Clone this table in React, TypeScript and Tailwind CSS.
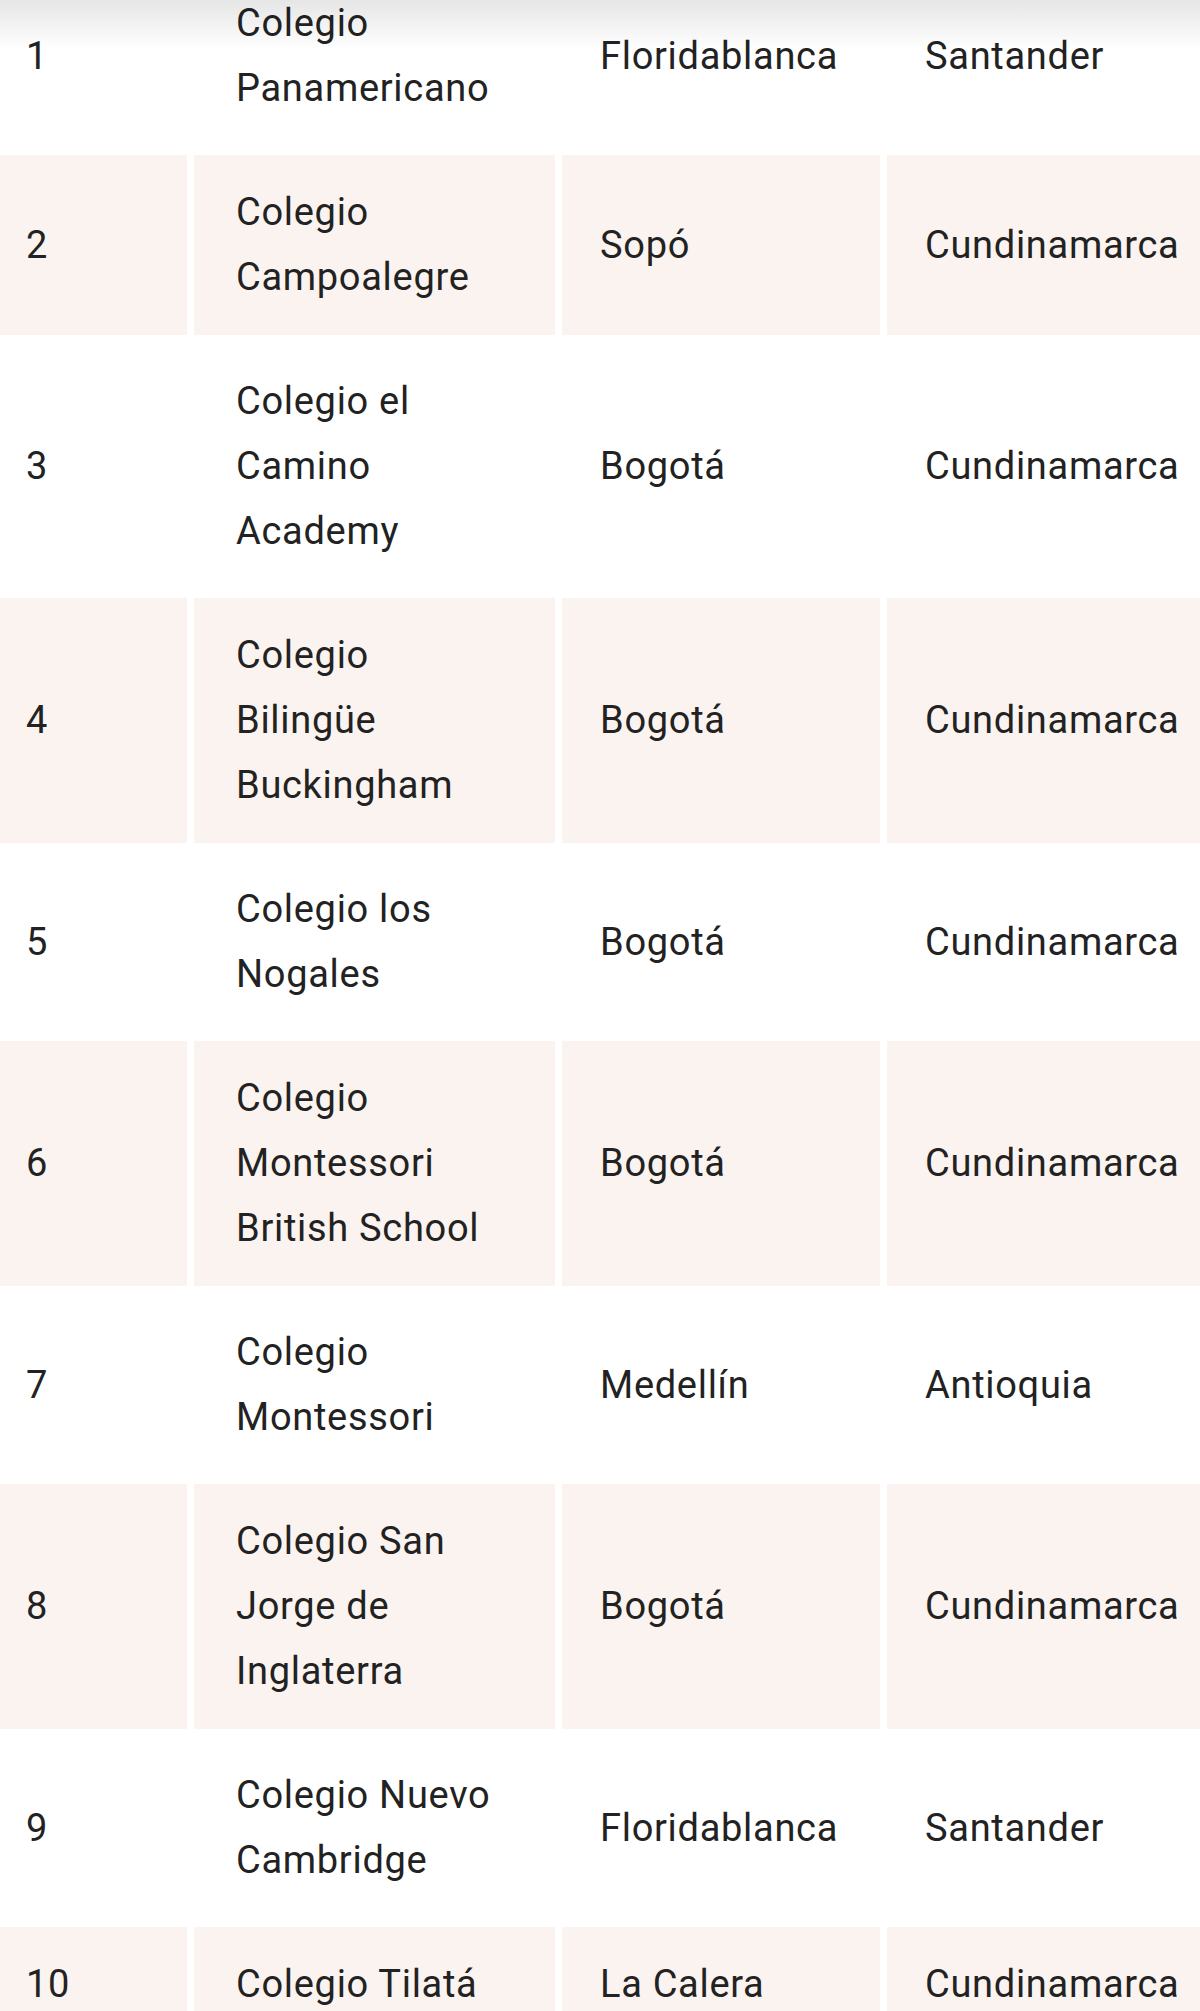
const schools = [
  { n: "1", name: ["Colegio", "Panamericano"], city: "Floridablanca", dept: "Santander" },
  { n: "2", name: ["Colegio", "Campoalegre"], city: "Sopó", dept: "Cundinamarca" },
  { n: "3", name: ["Colegio el", "Camino", "Academy"], city: "Bogotá", dept: "Cundinamarca" },
  { n: "4", name: ["Colegio", "Bilingüe", "Buckingham"], city: "Bogotá", dept: "Cundinamarca" },
  { n: "5", name: ["Colegio los", "Nogales"], city: "Bogotá", dept: "Cundinamarca" },
  { n: "6", name: ["Colegio", "Montessori", "British School"], city: "Bogotá", dept: "Cundinamarca" },
  { n: "7", name: ["Colegio", "Montessori"], city: "Medellín", dept: "Antioquia" },
  { n: "8", name: ["Colegio San", "Jorge de", "Inglaterra"], city: "Bogotá", dept: "Cundinamarca" },
  { n: "9", name: ["Colegio Nuevo", "Cambridge"], city: "Floridablanca", dept: "Santander" },
  { n: "10", name: ["Colegio Tilatá"], city: "La Calera", dept: "Cundinamarca" },
];

const App = () => {
  return (
    <div
      className="relative w-[1200px] h-[2011px] overflow-hidden bg-white text-[#222222] text-[38px] leading-[65px] tracking-[0.7px]"
      style={{ fontFamily: "Roboto, 'Noto Sans', Arial, sans-serif" }}
    >
      <div className="ml-[-13px] mt-[-34px] w-[1213px] flex flex-col gap-y-[9px]">
        {schools.map((s, i) => {
          const bg = i % 2 === 1 ? "bg-[#fbf3ef]" : "bg-white";
          return (
            <div key={s.n} className="grid grid-cols-[200px_361px_318px_1fr] gap-x-[7px]">
              <div className={`${bg} flex items-center pl-[39px] py-[25px]`}>{s.n}</div>
              <div className={`${bg} flex items-center pl-[42px] py-[25px]`}>
                <div>
                  {s.name.map((l) => (
                    <div key={l} className="whitespace-nowrap">{l}</div>
                  ))}
                </div>
              </div>
              <div className={`${bg} flex items-center pl-[38px] py-[25px] whitespace-nowrap`}>{s.city}</div>
              <div className={`${bg} flex items-center pl-[38px] py-[25px] whitespace-nowrap`}>{s.dept}</div>
            </div>
          );
        })}
      </div>
      {/* header shadow */}
      <div className="pointer-events-none absolute top-0 left-0 right-0 h-[50px] bg-gradient-to-b from-black/10 to-transparent" />
    </div>
  );
};

export default App;
